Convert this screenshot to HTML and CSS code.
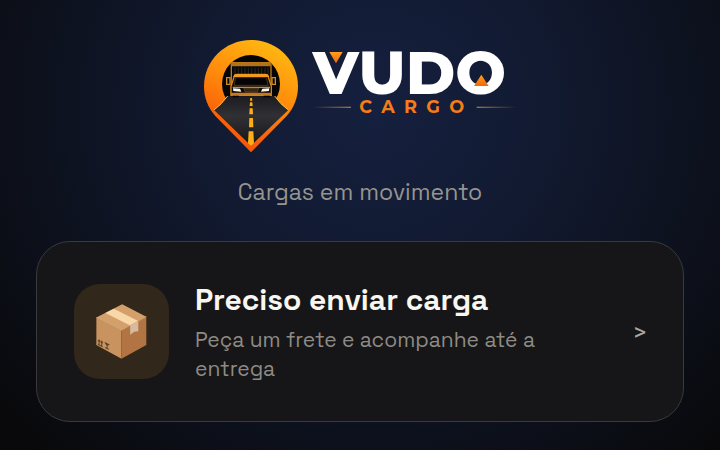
FILE: index.html
```html
<!DOCTYPE html>
<html lang="pt-BR">
<head>
<meta charset="utf-8">
<meta name="viewport" content="width=device-width, initial-scale=1">
<title>Vudo Cargo</title>
<link rel="stylesheet" href="styles.css">
</head>
<body>
<main class="page">
  <header class="brand">
    <svg class="logo" viewBox="27 30 939 342" role="img" aria-label="Vudo Cargo">
      <defs>
        <linearGradient id="pin" x1="0.7" y1="0" x2="0.3" y2="1">
          <stop offset="0" stop-color="#ffb911"/>
          <stop offset="0.45" stop-color="#ff8a0c"/>
          <stop offset="0.75" stop-color="#fb6408"/>
          <stop offset="1" stop-color="#f0520c"/>
        </linearGradient>
        <linearGradient id="road" x1="0" y1="0" x2="0" y2="1">
          <stop offset="0" stop-color="#1b1b20"/>
          <stop offset="0.4" stop-color="#303035"/>
          <stop offset="1" stop-color="#151519"/>
        </linearGradient>
        <linearGradient id="accent" x1="0" y1="0" x2="0" y2="1">
          <stop offset="0" stop-color="#ffa01c"/>
          <stop offset="1" stop-color="#f4660a"/>
        </linearGradient>
        <linearGradient id="lineLeft">
          <stop offset="0" stop-color="#e08a35" stop-opacity="0"/>
          <stop offset="1" stop-color="#e08a35"/>
        </linearGradient>
        <linearGradient id="lineRight">
          <stop offset="0" stop-color="#e08a35"/>
          <stop offset="1" stop-color="#e08a35" stop-opacity="0"/>
        </linearGradient>
      </defs>
      <path fill="url(#pin)" d="M168 30C246 30 309 92 309 169C309 204 297 233 275 258L168 367L61 258C39 233 27 204 27 169C27 92 90 30 168 30Z"/>
      <circle cx="168" cy="162" r="87" fill="#050506"/>
      <path fill="url(#road)" d="M98 198Q80 223 57 240L168 347L280 240Q256 223 239 198Z"/>
      <path fill="none" stroke="#ffc247" stroke-width="3" d="M98 198Q80 223 57 240M239 198Q256 223 280 240"/>
      <path fill="#ffae18" d="M166 204h5l1 8h-7zM165 217h7l1 11h-9zM164 235h9l1 18h-11zM163 264h11l1 28h-13zM161 304h14l2 36-9 8-9-8z"/>
      <path fill="#08080a" stroke="#bd7818" stroke-width="4" d="M109 188V101q0-3 3-3h113q3 0 3 3v87z"/>
      <path fill="#b0731b" d="M110 98h117v11H110z"/>
      <path stroke="#2c2825" stroke-width="3" d="M120 113v22M130 113v22M140 113v22M150 113v22M160 113v22M170 113v22M180 113v22M190 113v22M200 113v22M210 113v22M219 113v22"/>
      <path fill="#0b0b0d" stroke="#d0851e" stroke-width="4" d="M108 196v-26l10-32q2-5 8-5h85q6 0 8 5l10 32v26z"/>
      <path fill="#f29a1c" d="M120 132h97l6 9H114z"/>
      <path fill="#050507" stroke="#6b4416" stroke-width="2" d="M122 143h92l5 23H117z"/>
      <path fill="none" stroke="#d38b22" stroke-width="4" d="M95 143h10v20h-10zM231 143h10v20h-10zM113 172h112"/>
      <path fill="#fff8e8" d="M114 175l21 1 4 9-24-2zM223 175l-21 1-4 9 24-2z"/>
      <path fill="#1b1510" stroke="#755020" stroke-width="2" d="M146 175h46l-5 11h-36z"/>
      <path stroke="#926020" d="M149 179h40M150 183h38"/>
      <path fill="#c67a1d" d="M107 188h124v8H107z"/>
      <path fill="#050506" d="M113 197h19v5h-19zM206 197h19v5h-19z"/>
      <text class="wordmark" x="353" y="192">VUDO</text>
      <path fill="url(#accent)" d="M403 66h40l-20 34z"/>
      <path fill="url(#accent)" d="M837 168h44l-22-34z"/>
      <path fill="url(#lineLeft)" d="M353 230h115v3H353z"/>
      <path fill="url(#lineRight)" d="M845 230h120v3H845z"/>
      <text class="submark" x="493" y="250">CARGO</text>
    </svg>
    <p class="tagline">Cargas em movimento</p>
  </header>
  <a class="card" href="#enviar">
    <span class="tile">
      <svg class="package" viewBox="34 28 152 164" aria-hidden="true">
        <path fill="#d3a06c" d="M112 29L184 66 110 106 35 68z"/>
        <path fill="#c8935e" d="M35 68L110 106V191L35 150z"/>
        <path fill="#b27443" d="M110 106L184 66V150L110 191z"/>
        <path fill="#f8d8a8" d="M87 42L62 55 136 92 160 79z"/>
        <path fill="#d8baa0" d="M136 92L160 79V109L148 111 136 120z"/>
        <path fill="none" stroke="#e1b27c" stroke-width="2" d="M35 68L110 106 184 66"/>
        <path fill="none" stroke="#594025" stroke-width="3" d="M40 148l14 8M43 136v13M51 140v13M40 139l3-4 3 6M48 143l3-4 3 6M60 143l14 7M63 144q2 9 8 6M67 149v11M61 158l11 5"/>
      </svg>
    </span>
    <span class="copy">
      <strong class="title">Preciso enviar carga</strong>
      <span class="description">Peça um frete e acompanhe até a entrega</span>
    </span>
    <span class="arrow" aria-hidden="true">&gt;</span>
  </a>
</main>
</body>
</html>
```
FILE: styles.css
```css
* {
  box-sizing: border-box;
}

body {
  margin: 0;
  min-height: 100vh;
  background: radial-gradient(ellipse 68% 105% at 52% 24%, #15203f 0%, #121a31 35%, #0d111d 70%, #09090b 100%);
  color: #f8f6ef;
  font-family: "Space Grotesk", Inter, "Liberation Sans", sans-serif;
}

.page {
  padding: 40px 36px 28px;
}

.brand {
  display: flex;
  flex-direction: column;
  align-items: center;
  gap: 24px;
  margin-bottom: 34px;
}

.logo {
  display: block;
  width: 313px;
  height: 114px;
  overflow: visible;
}

.wordmark {
  fill: #fff;
  font: 800 180px Montserrat, "DejaVu Sans", sans-serif;
}

.submark {
  fill: #f57c18;
  font: 700 53px Montserrat, Inter, sans-serif;
  letter-spacing: 28px;
}

.tagline {
  margin: 0;
  color: #97958f;
  font-size: 23px;
  line-height: 29px;
}

.card {
  display: flex;
  align-items: center;
  gap: 26px;
  min-height: 181px;
  padding: 36px 37px;
  border: 1px solid #3a3a3c;
  border-radius: 34px;
  background: #161618;
  color: inherit;
  text-decoration: none;
}

.tile {
  display: grid;
  flex: none;
  place-items: center;
  width: 95px;
  height: 95px;
  border-radius: 26px;
  background: #31271a;
}

.package {
  width: 51px;
  height: 55px;
}

.copy {
  display: flex;
  flex: 1;
  flex-direction: column;
  gap: 6px;
  max-width: 360px;
}

.title {
  font-size: 30px;
  font-weight: 700;
  line-height: 38px;
}

.description {
  color: #8e8b85;
  font-size: 21px;
  line-height: 29px;
}

.arrow {
  margin-left: auto;
  color: #aaa8a2;
  font-family: Roboto, sans-serif;
  font-size: 24px;
}
```
